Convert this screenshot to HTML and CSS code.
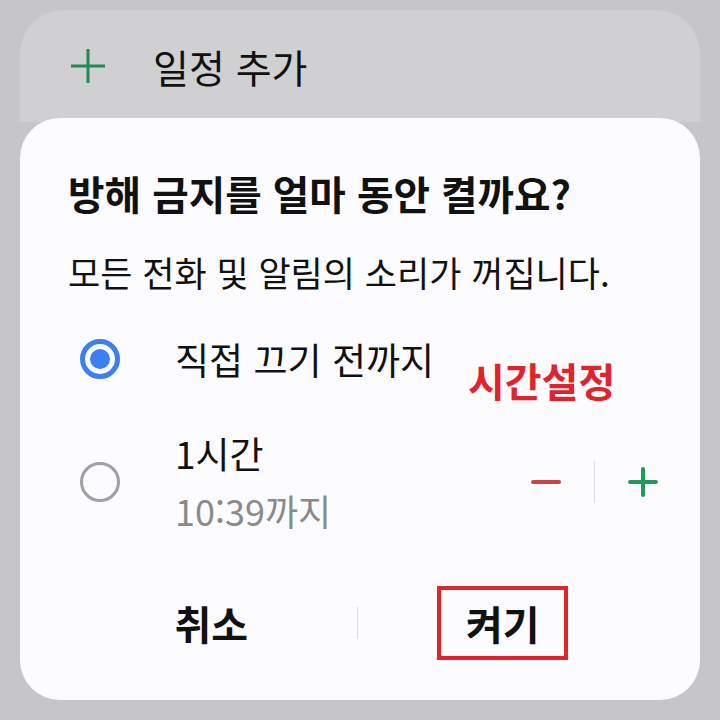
FILE: index.html
```html
<!DOCTYPE html>
<html lang="ko">
<head>
<meta charset="utf-8">
<link rel="stylesheet" href="styles.css">
</head>
<body>
<div class="screen">
  <div class="topcard">
    <svg class="addicon" width="36" height="36" viewBox="0 0 36 36"><path d="M18 1V35M1 18H35" stroke="#1f8a52" stroke-width="3" fill="none"/></svg>
    <span class="toptext">일정 추가</span>
  </div>
  <div class="dialog">
    <div class="title">방해 금지를 얼마 동안 켤까요?</div>
    <div class="subtitle">모든 전화 및 알림의 소리가 꺼집니다.</div>
    <div class="option opt1">
      <span class="radio on"></span>
      <span class="optlabel">직접 끄기 전까지</span>
      <span class="annot">시간설정</span>
    </div>
    <div class="option opt2">
      <span class="radio"></span>
      <div class="optcol">
        <span class="optlabel">1시간</span>
        <span class="optsub">10:39까지</span>
      </div>
      <div class="stepper">
        <svg width="30" height="6" viewBox="0 0 30 6"><path d="M2 3H28" stroke="#c9463f" stroke-width="4" stroke-linecap="round"/></svg>
        <span class="vdiv"></span>
        <svg width="30" height="30" viewBox="0 0 30 30"><path d="M15 2V28M2 15H28" stroke="#1f9a58" stroke-width="4" stroke-linecap="round"/></svg>
      </div>
    </div>
    <div class="buttons">
      <span class="btn">취소</span>
      <span class="bdiv"></span>
      <span class="btn"><span class="boxed">켜기</span></span>
    </div>
  </div>
</div>
</body>
</html>
```
FILE: styles.css
```css
html, body { margin: 0; padding: 0; }
body {
  width: 720px; height: 720px; overflow: hidden;
  background: #c6c6c8;
  font-family: "Noto Sans CJK KR", "Noto Sans", sans-serif;
  color: #111;
}
.screen { padding: 10px 20px 0 20px; }
.topcard {
  height: 112px;
  background: #d0d0d2;
  border-radius: 44px 44px 0 0;
  display: flex; align-items: center;
  padding: 0 0 0 50px;
  box-sizing: border-box;
}
.addicon { margin-right: 47px; }
.toptext { font-size: 39px; line-height: 50px; color: #111; }
.dialog {
  background: #fcfcfe;
  border-radius: 40px;
  height: 582px;
  margin-top: -4px;
  padding: 50px 0 0 48px;
  box-sizing: border-box;
  position: relative;
}
.title { font-size: 39.7px; font-weight: 700; line-height: 50px; }
.subtitle { font-size: 35px; line-height: 40px; margin-top: 34px; }
.option { display: flex; align-items: center; }
.opt1 { margin-top: 43px; height: 48px; }
.radio {
  width: 40px; height: 40px; border-radius: 50%;
  border: 3px solid #a0a0a0; box-sizing: border-box;
  margin-left: 12px; margin-right: 55px; flex: none;
}
.radio.on { border: 5px solid #3c7ff0; position: relative; }
.radio.on::after {
  content: ""; position: absolute; left: 5px; top: 5px;
  width: 20px; height: 20px; border-radius: 50%; background: #3c7ff0;
}
.optlabel { font-size: 37px; line-height: 44px; }
.annot {
  color: #e0242b; font-weight: 700; font-size: 40px; line-height: 44px;
  margin-left: 34px; position: relative; top: 21px;
}
.opt2 { margin-top: 48px; }
.optcol { display: flex; flex-direction: column; }
.optsub { font-size: 36px; color: #8a8a8a; line-height: 44px; margin-top: 13px; }
.stepper { display: flex; align-items: center; margin-left: auto; margin-right: 42px; }
.vdiv { width: 1px; height: 42px; background: #dcdcdc; margin: 0 33px; }
.buttons {
  display: flex; align-items: center;
  position: absolute; left: 0; right: 0; bottom: 40px;
  height: 74px;
  padding: 0 52px 0 46px;
}
.btn { flex: 1; text-align: center; font-size: 40px; font-weight: 700; line-height: 50px; }
.bdiv { width: 1px; height: 32px; background: #dcdcdc; }
.boxed {
  display: inline-block; border: 4px solid #e0242b;
  width: 131px; height: 74px; line-height: 66px; box-sizing: border-box;
}
```
